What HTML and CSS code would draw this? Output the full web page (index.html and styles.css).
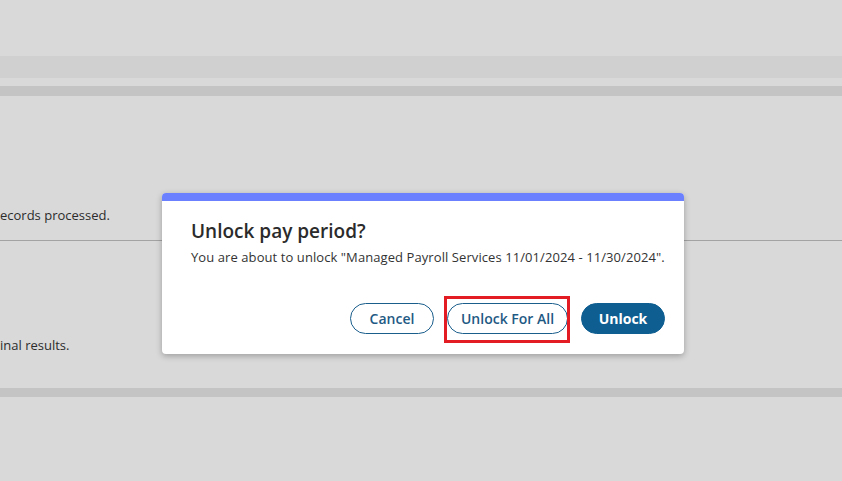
FILE: index.html
```html
<!DOCTYPE html>
<html>
<head>
<meta charset="utf-8">
<link rel="stylesheet" href="styles.css">
</head>
<body>
<div class="page">
  <div class="band-a"></div>
  <div class="band-b"></div>
  <div class="section">
    <p class="bg-text first">ecords processed.</p>
    <div class="rule"></div>
    <p class="bg-text second">inal results.</p>
  </div>
  <div class="band-c"></div>
</div>

<div class="dialog">
  <div class="dialog-top"></div>
  <div class="dialog-body">
    <h2 class="title">Unlock pay period?</h2>
    <p class="message">You are about to unlock "Managed Payroll Services 11/01/2024 - 11/30/2024".</p>
    <div class="actions">
      <button class="btn outline">Cancel</button>
      <span class="highlight"><button class="btn outline wide">Unlock For All</button></span>
      <button class="btn solid">Unlock</button>
    </div>
  </div>
</div>
</body>
</html>
```
FILE: styles.css
```css
* { box-sizing: border-box; }
html, body { margin: 0; padding: 0; }
body {
  width: 842px;
  height: 481px;
  background: #d9d9d9;
  font-family: "Open Sans", "Noto Sans", sans-serif;
  overflow: hidden;
  position: relative;
}
.page { display: flex; flex-direction: column; }
.band-a { margin-top: 56px; height: 22px; background: #d0d0d0; }
.band-b { margin-top: 8px; height: 10px; background: #c4c4c4; }
.section { display: flex; flex-direction: column; }
.bg-text {
  margin: 0;
  font-size: 13px;
  line-height: 18px;
  color: #2c2c2c;
}
.first { margin-top: 110px; }
.rule { margin-top: 16px; height: 1px; background: #a3a3a3; }
.second { margin-top: 95px; }
.band-c { margin-top: 34px; height: 9px; background: #c4c4c4; }

.dialog {
  position: absolute;
  left: 162px;
  top: 193px;
  width: 522px;
  height: 161px;
  background: #fff;
  border-radius: 4px;
  overflow: hidden;
  box-shadow: 0 2px 6px rgba(0,0,0,0.28);
}
.dialog-top { height: 8px; background: #6b80ff; }
.dialog-body { padding: 17px 19px 0 29px; }
.title {
  margin: 0;
  font-family: "Open Sans", sans-serif;
  font-weight: 600;
  font-size: 19px;
  line-height: 26px;
  color: #2b2b2b;
}
.message {
  margin: 4px 0 0;
  font-size: 13px;
  line-height: 18px;
  letter-spacing: 0.08px;
  color: #333;
}
.actions {
  display: flex;
  justify-content: flex-end;
  align-items: center;
  gap: 13px;
  margin-top: 37px;
}
.btn {
  height: 31px;
  border-radius: 16px;
  font-family: "Open Sans", sans-serif;
  font-weight: 600;
  font-size: 14px;
  padding: 0;
  width: 84px;
  cursor: pointer;
}
.outline {
  background: #fff;
  border: 1px solid #1a5e8c;
  color: #1f5a84;
}
.wide { width: 121px; }
.solid {
  background: #0f5e91;
  border: 1px solid #0f5e91;
  color: #fff;
  font-weight: 700;
}
.highlight {
  position: relative;
  display: flex;
}
.highlight::after {
  content: "";
  position: absolute;
  left: -3px;
  right: -2px;
  top: -7px;
  bottom: -9px;
  border: 3px solid #e31b23;
  pointer-events: none;
}
```
